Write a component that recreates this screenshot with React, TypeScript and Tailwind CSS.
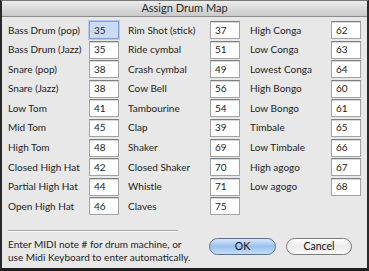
import type { ReactNode } from 'react';

type Entry = { label: string; value: string };

const col1: Entry[] = [
  { label: 'Bass Drum (pop)', value: '35' },
  { label: 'Bass Drum (Jazz)', value: '35' },
  { label: 'Snare (pop)', value: '38' },
  { label: 'Snare (Jazz)', value: '38' },
  { label: 'Low Tom', value: '41' },
  { label: 'Mid Tom', value: '45' },
  { label: 'High Tom', value: '48' },
  { label: 'Closed High Hat', value: '42' },
  { label: 'Partial High Hat', value: '44' },
  { label: 'Open High Hat', value: '46' },
];

const col2: Entry[] = [
  { label: 'Rim Shot (stick)', value: '37' },
  { label: 'Ride cymbal', value: '51' },
  { label: 'Crash cymbal', value: '49' },
  { label: 'Cow Bell', value: '56' },
  { label: 'Tambourine', value: '54' },
  { label: 'Clap', value: '39' },
  { label: 'Shaker', value: '69' },
  { label: 'Closed Shaker', value: '70' },
  { label: 'Whistle', value: '71' },
  { label: 'Claves', value: '75' },
];

const col3: Entry[] = [
  { label: 'High Conga', value: '62' },
  { label: 'Low Conga', value: '63' },
  { label: 'Lowest Conga', value: '64' },
  { label: 'High Bongo', value: '60' },
  { label: 'Low Bongo', value: '61' },
  { label: 'Timbale', value: '65' },
  { label: 'Low Timbale', value: '66' },
  { label: 'High agogo', value: '67' },
  { label: 'Low agogo', value: '68' },
];

function NoteBox({ value, focused }: { value: string; focused?: boolean }) {
  return (
    <div
      className={
        focused
          ? 'flex h-[18px] w-[30px] items-center border border-[#7f9fd6] bg-[#cbdaf5] pl-[4px] shadow-[0_0_0_1px_#b4c9ee]'
          : 'flex h-[18px] w-[30px] items-center border border-[#a3a3a3] border-t-[#7e7e7e] bg-white pl-[4px] shadow-[inset_0_1px_0_#d9d9d9]'
      }
    >
      {value}
    </div>
  );
}

function Column({ entries, width, focusFirst }: { entries: Entry[]; width: string; focusFirst?: boolean }) {
  return (
    <div className={`flex flex-col gap-[1.6px] ${width}`}>
      {entries.map((e, i) => (
        <div key={e.label} className="flex h-[18px] items-center justify-between">
          <span>{e.label}</span>
          <NoteBox value={e.value} focused={focusFirst && i === 0} />
        </div>
      ))}
    </div>
  );
}

function AquaButton({ children, primary }: { children: ReactNode; primary?: boolean }) {
  return (
    <button
      type="button"
      className={
        primary
          ? 'flex h-[17px] w-[67px] items-center justify-center rounded-full border border-[#5b6f90] bg-gradient-to-b from-[#d7e6f9] via-[#9cc0ec] to-[#c4def8] text-[10.5px] text-[#111]'
          : 'flex h-[17px] w-[66px] items-center justify-center rounded-full border border-[#7b7b7b] bg-gradient-to-b from-[#ffffff] via-[#ececec] to-[#fafafa] text-[10.5px] text-[#111]'
      }
    >
      {children}
    </button>
  );
}

export default function App() {
  return (
    <div
      className="flex h-[271px] w-[369px] flex-col border-x-2 border-b-[3px] border-t border-x-[#2a2a2a] border-b-[#1e1e1e] border-t-[#777] bg-[#e8e8e8] text-[10px] text-[#1c1c1c]"
      style={{ fontFamily: 'Lato, "Liberation Sans", sans-serif' }}
    >
      {/* ── Title bar ── */}
      <div className="flex h-[16px] shrink-0 items-center justify-center border-b border-[#8c8c8c] bg-gradient-to-b from-[#ececec] to-[#c9c9c9] text-[11px] text-[#2a2a2a]">
        Assign Drum Map
      </div>

      {/* ── Drum columns ── */}
      <div className="flex pl-[6px] pt-[4px]">
        <Column entries={col1} width="w-[111px]" focusFirst />
        <div className="ml-[9px]">
          <Column entries={col2} width="w-[112px]" />
        </div>
        <div className="ml-[10px]">
          <Column entries={col3} width="w-[111px]" />
        </div>
      </div>

      {/* ── Footer ── */}
      <div className="flex pl-[6px]">
        <div className="w-[195px] whitespace-nowrap">
          <div className="mt-[15px] h-[2px] w-[170px] border-t border-b border-t-[#a9a9a9] border-b-[#f6f6f6]" />
          <div className="mt-[6px] leading-[13px]">
            <div>Enter MIDI note # for drum machine, or</div>
            <div>use Midi Keyboard to enter automatically.</div>
          </div>
        </div>
        <div className="ml-[6px] flex gap-[10px] pt-[23px]">
          <AquaButton primary>OK</AquaButton>
          <AquaButton>Cancel</AquaButton>
        </div>
      </div>
    </div>
  );
}
